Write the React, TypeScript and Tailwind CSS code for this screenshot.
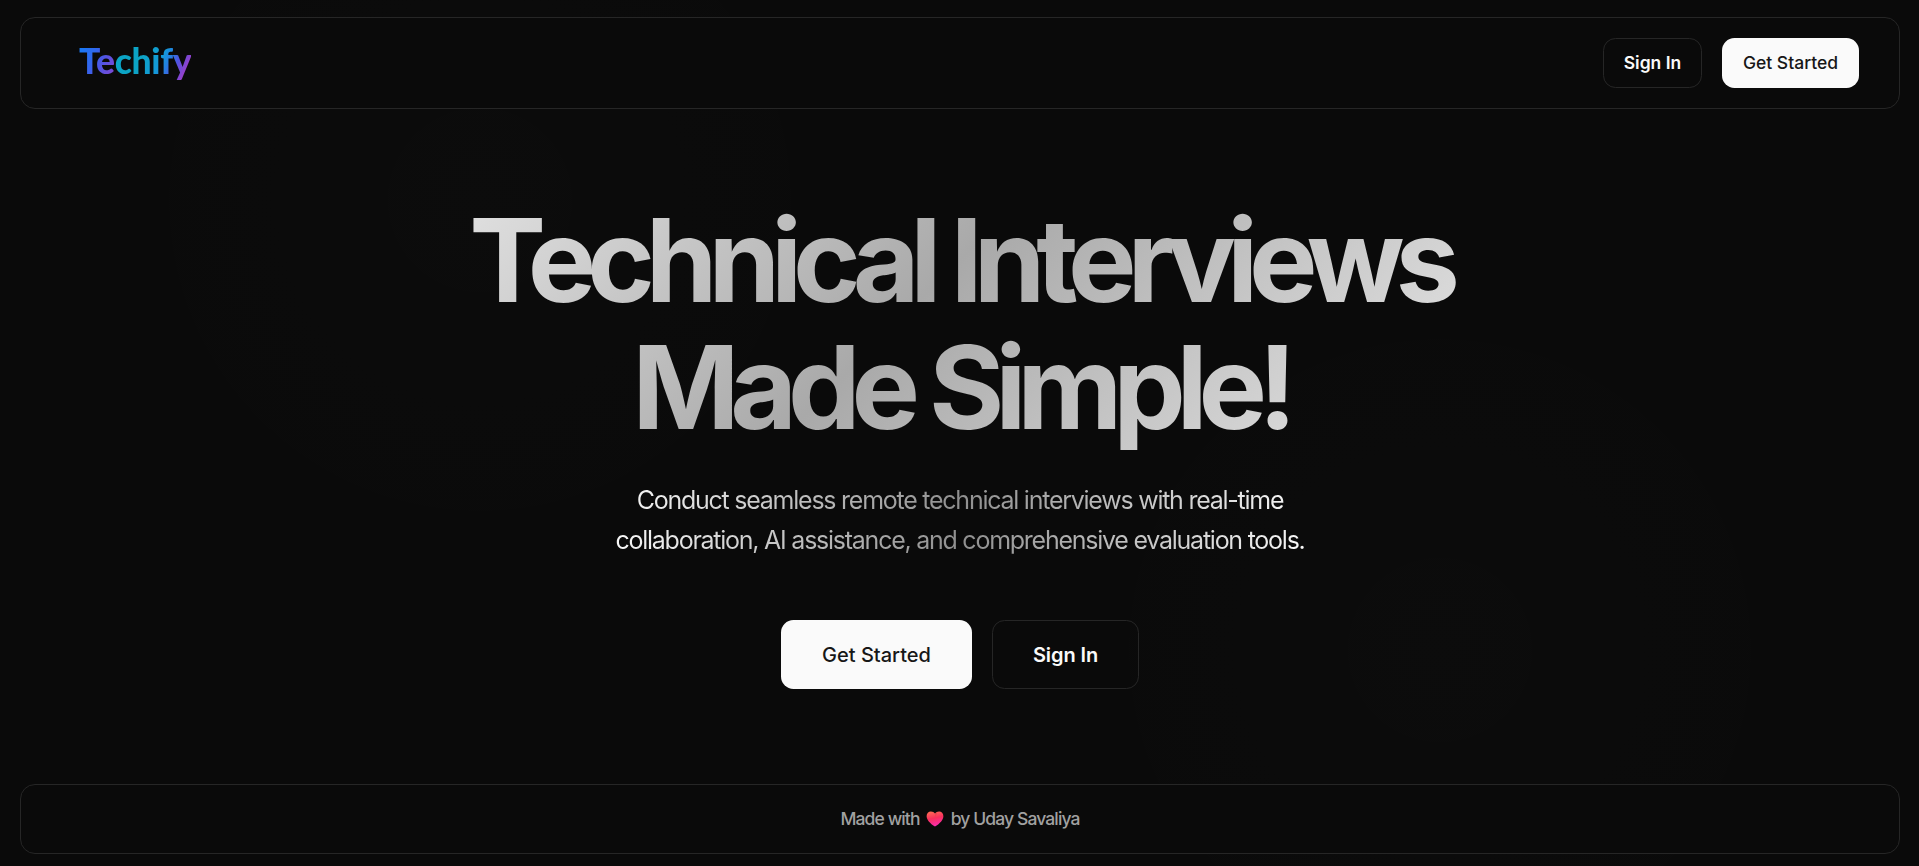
const INTER = "font-['Inter','Liberation_Sans',sans-serif]";

function Logo() {
  return (
    <a href="#" className="mb-1 flex font-['Lato','Inter',sans-serif] text-[35.5px] leading-[42px] font-black tracking-[-0.3px]">
      <span className="bg-[linear-gradient(115deg,#1878f4_10%,#3068ee_38%,#5055e4_60%,#8048d2_92%)] bg-clip-text text-transparent">Te</span>
      <span className="bg-[linear-gradient(115deg,#0aa5c8_0%,#0ca4c4_35%,#1499d8_58%,#2480e0_66%,#4f52e2_76%,#a83cc4_92%)] bg-clip-text text-transparent">chify</span>
    </a>
  );
}

function Heart() {
  return (
    <svg viewBox="0 0 18 16" className="mx-[6.5px] h-4 w-[18px]" aria-hidden="true">
      <defs>
        <linearGradient id="heart" x1="0.3" y1="0" x2="0.55" y2="1">
          <stop offset="0" stopColor="#ff6a55" />
          <stop offset="0.45" stopColor="#f8305c" />
          <stop offset="1" stopColor="#fb2cb4" />
        </linearGradient>
      </defs>
      <path d="M9 15.6C7.2 14.6.6 10 .6 5.2.6 2.4 2.5.5 4.9.5 6.7.5 8.2 1.5 9 2.4 9.8 1.5 11.3.5 13.1.5c2.4 0 4.3 1.9 4.3 4.7C17.4 10 10.8 14.6 9 15.6Z" fill="url(#heart)" />
      <path d="M9 2.6c.7.6.9 2.2.5 3.6L11 1.4C10.2 1.6 9.5 2 9 2.6Z" fill="#c8323f" opacity=".5" />
    </svg>
  );
}

export default function App() {
  return (
    <div
      className={`${INTER} flex h-[866px] flex-col overflow-hidden bg-[#0a0a0a] bg-[radial-gradient(circle_420px_at_480px_200px,rgba(255,255,255,0.006),transparent),radial-gradient(circle_420px_at_1440px_650px,rgba(255,255,255,0.006),transparent)] pt-[17px] pr-[19px] pb-3 pl-5 text-[#fafafa]`}
    >
      <header className="flex h-[92px] shrink-0 items-center justify-between rounded-[15px] border border-[#262626] bg-[#0a0a0a] pr-10 pl-[58px]">
        <Logo />
        <nav className="flex gap-5">
          <button className="h-[50px] w-[99px] rounded-[12.5px] border border-[#262626] text-[17.5px] font-semibold">Sign In</button>
          <button className="h-[50px] w-[137px] rounded-[12.5px] bg-[#fafafa] text-[17.5px] font-medium text-[#171717]">Get Started</button>
        </nav>
      </header>

      <main className="flex flex-1 flex-col items-center pt-[88px] text-center">
        <h1 className="bg-[linear-gradient(135deg,#e2e2e2_0%,#a9a9a9_45%,#e8e8e8_100%)] bg-clip-text px-4 text-[115.14px] leading-[1.1] font-bold tracking-[-0.0795em] text-transparent">
          Technical Interviews
          <br />
          Made Simple!
        </h1>
        <p className="mt-[30px] bg-linear-to-r from-[#fafafa] via-[#8f8f8f] to-[#fafafa] bg-clip-text px-1 text-[25px] leading-10 font-normal tracking-[-0.05em] text-transparent">
          Conduct seamless remote technical interviews with real-time
          <br />
          collaboration, AI assistance, and comprehensive evaluation tools.
        </p>
        <div className="mt-[60px] flex gap-5">
          <button className="h-[69px] w-[191px] rounded-[12.5px] bg-[#fafafa] text-[20px] font-medium text-[#171717]">Get Started</button>
          <button className="h-[69px] w-[147px] rounded-[12.5px] border border-[#262626] text-[20px] font-semibold tracking-[-0.1px]">Sign In</button>
        </div>
      </main>

      <footer className="flex h-[70px] shrink-0 items-center justify-center rounded-[15px] border border-[#262626] bg-[#0a0a0a] text-[17.5px] font-medium tracking-[-0.05em] text-[#a1a1a1]">
        <span>Made with</span>
        <Heart />
        <span>by Uday Savaliya</span>
      </footer>
    </div>
  );
}
